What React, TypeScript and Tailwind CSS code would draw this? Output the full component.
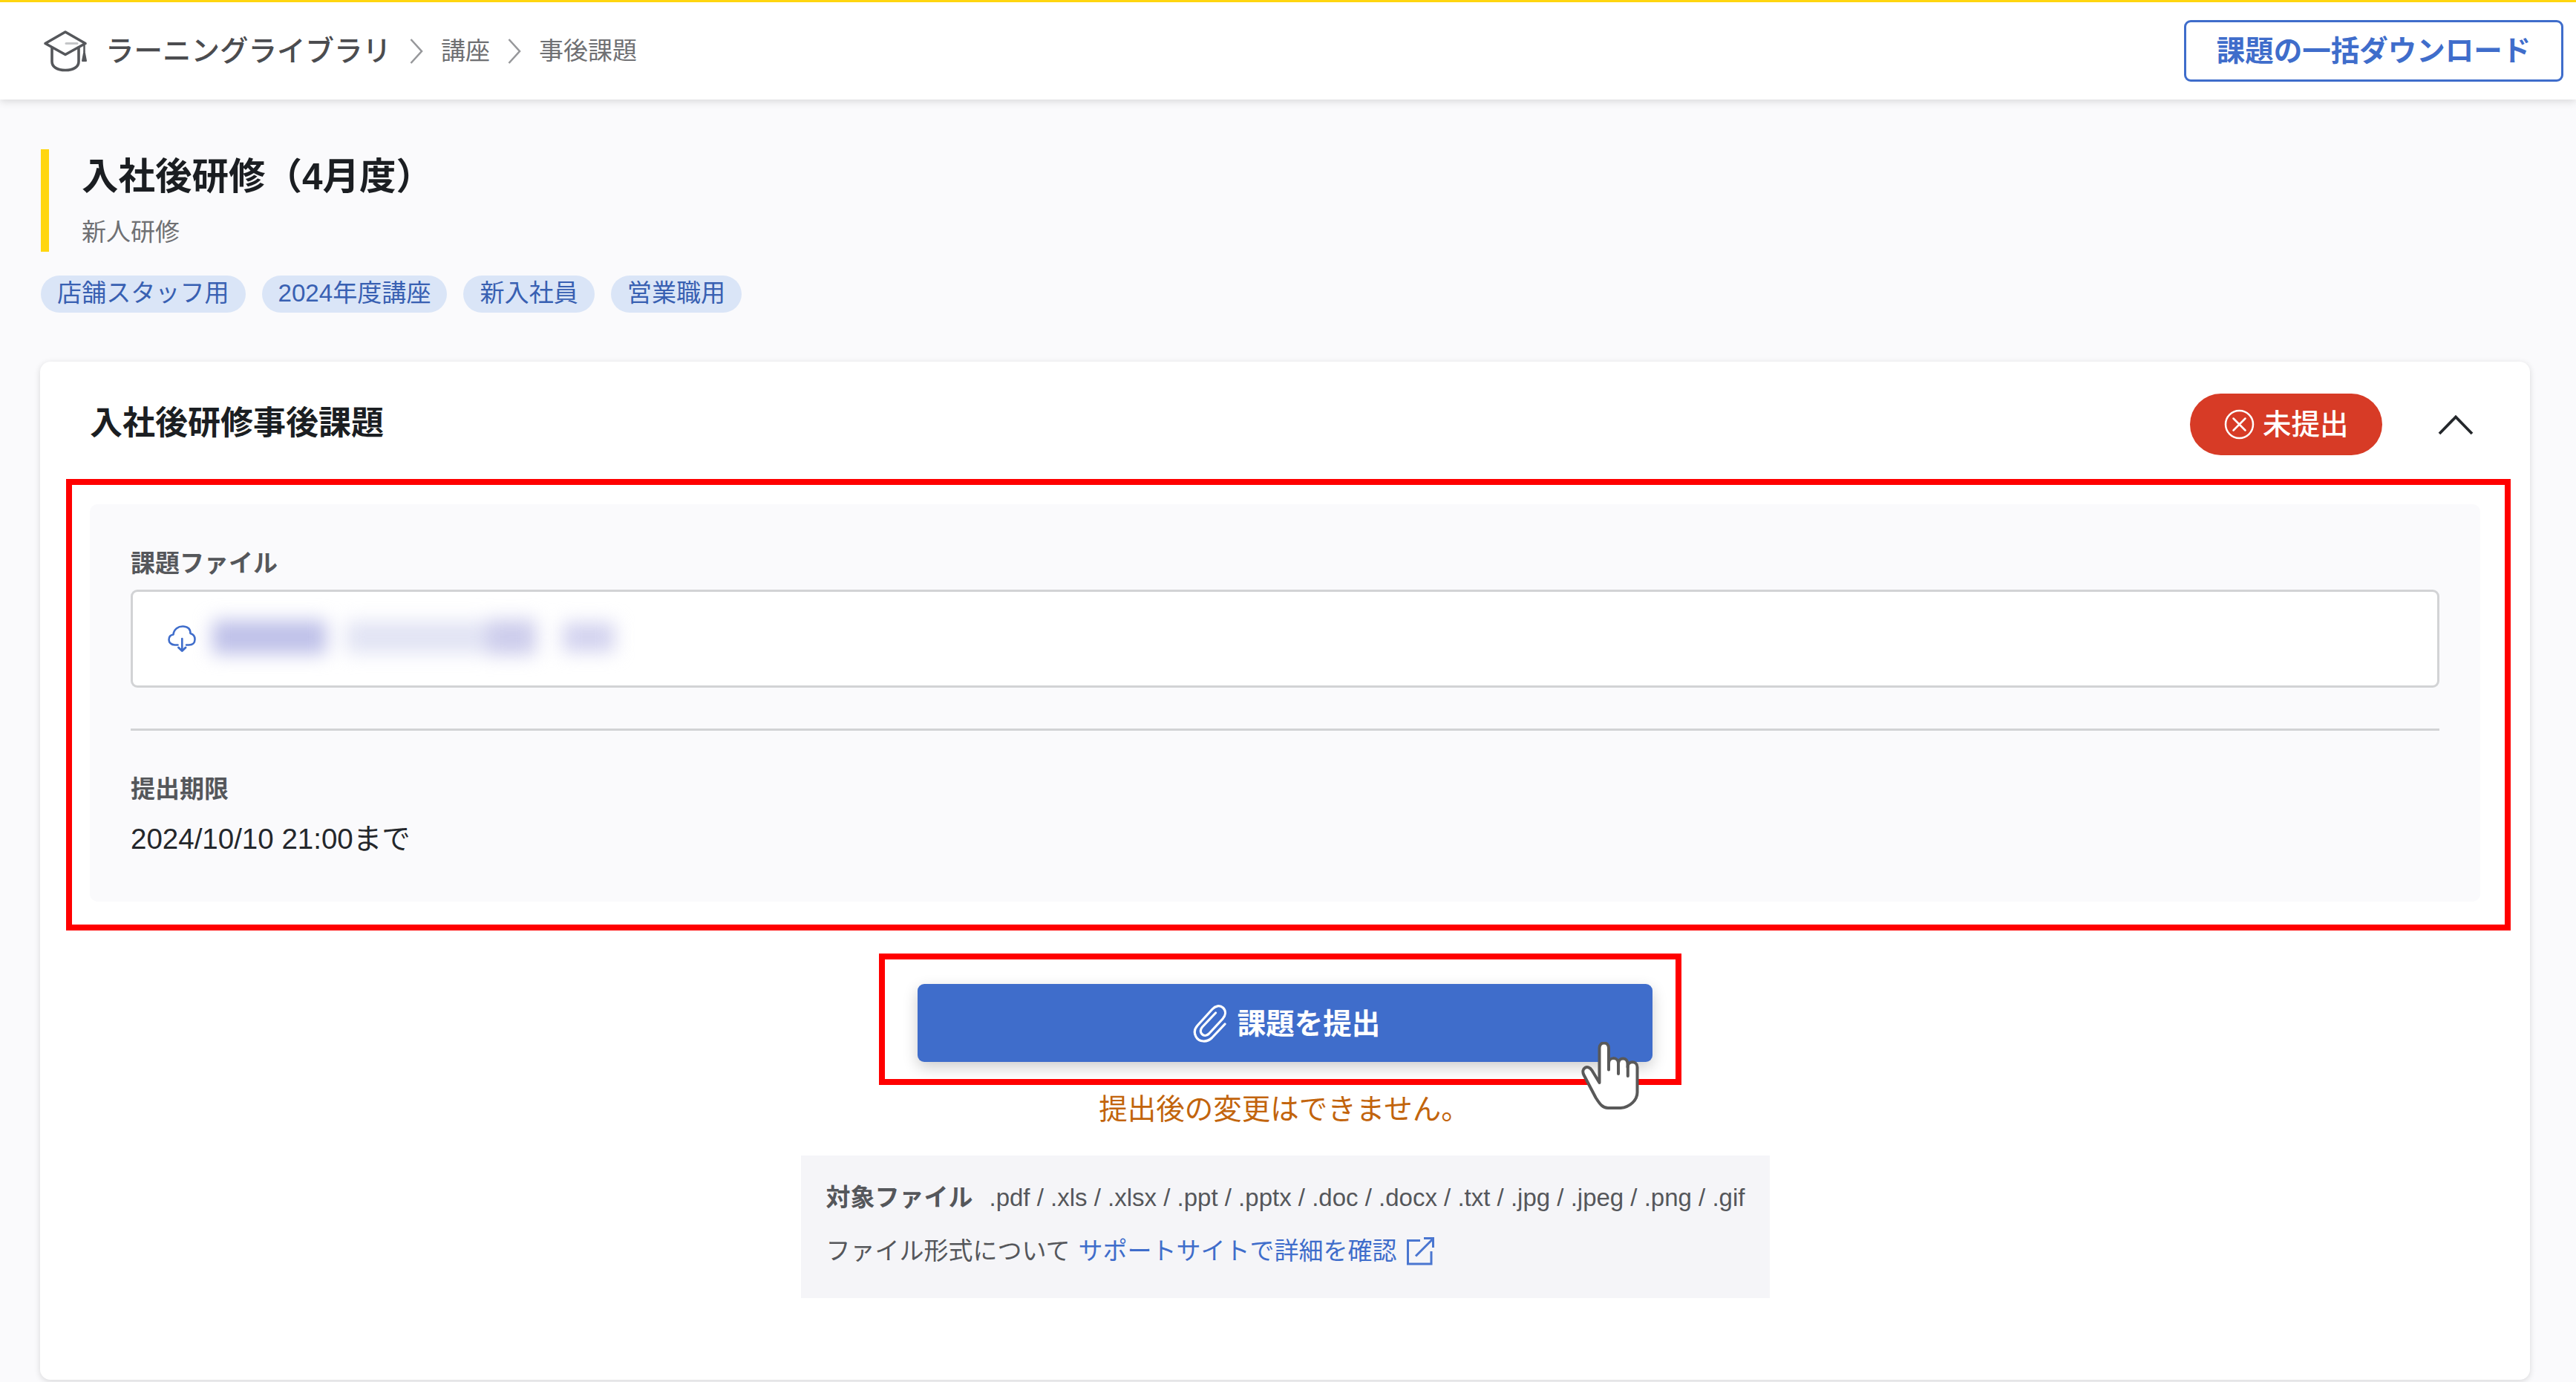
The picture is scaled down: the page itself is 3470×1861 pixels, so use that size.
const tags = ['店舗スタッフ用', '2024年度講座', '新入社員', '営業職用'];

const extensions = '.pdf / .xls / .xlsx / .ppt / .pptx / .doc / .docx / .txt / .jpg / .jpeg / .png / .gif';

function GraduationIcon() {
  return (
    <svg className="w-[60px] h-[58px]" viewBox="0 0 60 58" fill="none" stroke="#55575b" strokeWidth="3.6" strokeLinejoin="round" strokeLinecap="round">
      <path d="M30 3 L57 18.5 L30 33.500 L3 18.500 Z" />
      <path d="M12 24 V43 C12 50 19 54.500 30 54.500 C41 54.500 48 50 48 43 V24" />
      <path d="M31 18.500 H46" stroke="#c4c5c7" strokeWidth="3" />
      <path d="M55.500 21 V29" strokeWidth="2.500" />
      <path d="M55.500 29 L53 42 H58 Z" fill="#55575b" strokeWidth="2" />
    </svg>
  );
}

function Separator() {
  return (
    <svg className="w-[18px] h-[34px]" viewBox="0 0 18 34" fill="none" stroke="#97989b" strokeWidth="2.600">
      <path d="M1.500 1 L16 17 L1.500 33" />
    </svg>
  );
}

function CloudIcon() {
  return (
    <svg className="w-[38px] h-[38px]" viewBox="0 0 38 38" fill="none" stroke="#3f6dcb" strokeWidth="2.600" strokeLinecap="round" strokeLinejoin="round">
      <path d="M13.500 27.500 H9.500 C4.500 27.500 1.500 24 1.500 20.500 C1.500 16.500 4 14 7.500 13.500 C8 6.500 14 2 21 2.500 C27.500 3 30.500 7 30.500 12 C34.500 13 36.500 16.500 36.500 20 C36.500 24.500 33.500 27.500 28.500 27.500 H25" />
      <path d="M19.300 19 V35" />
      <path d="M14.500 31 L19.300 35.500 L24 31" strokeWidth="3" />
    </svg>
  );
}

function ClipIcon() {
  return (
    <svg className="w-[46px] h-[52px]" viewBox="0 0 46 52" fill="none" stroke="#fff" strokeWidth="3.200" strokeLinecap="round" strokeLinejoin="round">
      <path d="M43 27 L25.500 45.500 C19 52 8 51.500 4 44 C1 38.500 2 33.500 6 29 L26 7 C30 2.500 36 1 40.500 5 C45 9.500 44 15.500 40 20 L21.500 40 C18.500 43 14.500 43 12 40.500 C9.500 37.500 10 34 12.500 31 L30.500 12" />
    </svg>
  );
}

function ExternalIcon() {
  return (
    <svg className="w-[40px] h-[40px]" viewBox="0 0 40 40" fill="none" stroke="#4a76d0" strokeWidth="3">
      <path d="M20 5.500 H3.500 V37 H35 V20" />
      <path d="M14 26.500 L36.500 4" />
      <path d="M25 2.500 H37.500 V15" />
    </svg>
  );
}

function HandCursor() {
  return (
    <svg className="absolute left-[2130px] top-[1403px] w-[80px] h-[92px]" viewBox="0 0 80 92" fill="#fff" stroke="#595959" strokeWidth="4" strokeLinejoin="round" strokeLinecap="round">
      <path d="M24.500 55 L14.500 38.500 C9 29.500 -1 35.500 3.500 44.500 L19.500 75 C25.500 84.500 29 89 36 89 H53 C66 88 75.500 78 75.500 68 V34 C75.500 25 62.500 25 62.500 34 V29.500 C62.500 20 50 20 50 29.500 V28 C49 20 37 20 37 29 V8.500 C37 -1 24.500 -1 24.500 8.500 Z" />
      <path d="M37 29 V37.500 M50 29 V43 M62.800 33 V46" />
    </svg>
  );
}

function Header() {
  return (
    <header className="h-[134px] shrink-0 bg-white border-t-[3px] border-[#ffd60f] shadow-[0_3px_10px_rgba(0,0,0,0.13)] flex items-center justify-between pl-[58px] pr-[17px]">
      <nav className="flex items-center text-[33px] text-[#6f7073]">
        <GraduationIcon />
        <span className="ml-[24px] w-[385px] text-[38.5px] font-medium text-[#4b4c4f]">ラーニングライブラリ</span>
        <span className="ml-[25px]"><Separator /></span>
        <span className="ml-6 w-[66px]">講座</span>
        <span className="ml-6"><Separator /></span>
        <span className="ml-6">事後課題</span>
      </nav>
      <button className="w-[511px] h-[83px] border-[3px] border-[#3f6dcb] rounded-[9px] text-[38.5px] font-bold text-[#3f6dcb]">
        課題の一括ダウンロード
      </button>
    </header>
  );
}

function CourseTitle() {
  return (
    <section className="mt-[67px] ml-[55px]">
      <div className="h-[138px] border-l-[11px] border-[#ffd60f] pl-[44px]">
        <h1 className="h-[72px] leading-[74px] text-[49.5px] font-bold text-[#1b1e22]">入社後研修（4月度）</h1>
        <p className="h-[66px] leading-[80px] text-[33px] text-[#6f7073]">新人研修</p>
      </div>
      <ul className="mt-[32px] flex gap-[22px]">
        {tags.map((tag) => (
          <li key={tag} className="h-[50px] px-[22px] rounded-full bg-[#dae5f7] text-[#3860b2] text-[33.1px] leading-[48px]">
            {tag}
          </li>
        ))}
      </ul>
    </section>
  );
}

function AssignmentPanel() {
  return (
    <div className="mx-[67px] h-[535px] rounded-[10px] bg-[#fafafc] px-[55px] pt-[54px]">
      <h3 className="h-[61px] leading-[51px] text-[33px] font-bold text-[#55575b]">課題ファイル</h3>
      <div className="h-[132px] flex items-center bg-white border-[3px] border-[#d2d3d5] rounded-[9px] pl-[47px]">
        <CloudIcon />
        {/* file name is masked */}
        <div className="ml-[22px] -mt-1 flex items-center blur-[12px]" aria-hidden="true">
          <span className="w-[154px] h-[46px] bg-[#bfc1e9]" />
          <span className="ml-[26px] w-[190px] h-[44px] bg-[#e2e4f4]" />
          <span className="w-[66px] h-[48px] bg-[#cdcdec]" />
          <span className="ml-[36px] w-[70px] h-[40px] bg-[#d3d3ef]" />
        </div>
      </div>
      <hr className="mt-[55px] border-t-[3px] border-[#d2d3d5]" />
      <h3 className="mt-[55px] leading-[48px] text-[33px] font-bold text-[#55575b]">提出期限</h3>
      <p className="mt-[15px] leading-[56px] text-[38.5px] text-[#24272b]">2024/10/10 21:00まで</p>
    </div>
  );
}

function FileTypes() {
  return (
    <div className="mt-[34px] w-[1305px] h-[192px] bg-[#f5f5f8] px-[34px] pt-[33px] text-[33px] text-[#55575b] whitespace-nowrap">
      <div className="flex leading-[48px]">
        <span className="font-bold">対象ファイル</span>
        <span className="ml-[22px]">{extensions}</span>
      </div>
      <div className="mt-[24px] flex items-center leading-[48px]">
        <span>ファイル形式について</span>
        <a className="ml-[11px] flex items-center text-[#3f6dcb]">
          サポートサイトで詳細を確認
          <span className="ml-[11px]"><ExternalIcon /></span>
        </a>
      </div>
    </div>
  );
}

function AssignmentCard() {
  return (
    <section className="mt-[66px] ml-[54px] w-[3354px] h-[1371px] shrink-0 bg-white rounded-[14px] shadow-[0_2px_9px_rgba(0,0,0,0.14)]">
      <div className="h-[192px] flex items-center pl-[67px] pr-[76px] pb-[23px]">
        <h2 className="text-[44px] font-bold text-[#1b1e22] -mt-1">入社後研修事後課題</h2>
        <span className="ml-auto w-[259px] h-[83px] rounded-full bg-[#d73b26] text-white text-[38.5px] font-medium flex items-center pl-[46px]">
          <svg className="w-[41px] h-[41px] mr-[11px]" viewBox="0 0 41 41" fill="none" stroke="#fff" strokeWidth="2.500" strokeLinecap="round">
            <circle cx="20.500" cy="20.500" r="18.500" />
            <path d="M12.500 12.500 L28.500 28.500 M28.500 12.500 L12.500 28.500" />
          </svg>
          未提出
        </span>
        <svg className="ml-[75px] w-[48px] h-[28px]" viewBox="0 0 48 28" fill="none" stroke="#24272b" strokeWidth="3.800">
          <path d="M2 26 L24 3.500 L46 26" />
        </svg>
      </div>
      <AssignmentPanel />
      <div className="flex flex-col items-center">
        <button className="mt-[111px] w-[990px] h-[105px] rounded-[9px] bg-[#3f6dcb] text-white text-[38.5px] font-bold flex items-center justify-center pl-[4px] shadow-[0_7px_20px_rgba(0,0,0,0.2)]">
          <ClipIcon />
          <span className="ml-[14px] mt-[2px]">課題を提出</span>
        </button>
        <p className="mt-[36px] -ml-[2px] leading-[56px] text-[38.5px] text-[#c2640c]">提出後の変更はできません。</p>
        <FileTypes />
      </div>
    </section>
  );
}

export default function App() {
  return (
    <div className="relative w-[3470px] h-[1861px] overflow-hidden flex flex-col bg-[#fafafc] font-['Liberation_Sans','Noto_Sans_CJK_JP',sans-serif]">
      <Header />
      <CourseTitle />
      <AssignmentCard />
      {/* callout frames over the page */}
      <div className="absolute left-[89px] top-[645px] w-[3293px] h-[608px] border-8 border-[#ff0000]" />
      <div className="absolute left-[1184px] top-[1284px] w-[1081px] h-[177px] border-8 border-[#ff0000]" />
      <HandCursor />
    </div>
  );
}
